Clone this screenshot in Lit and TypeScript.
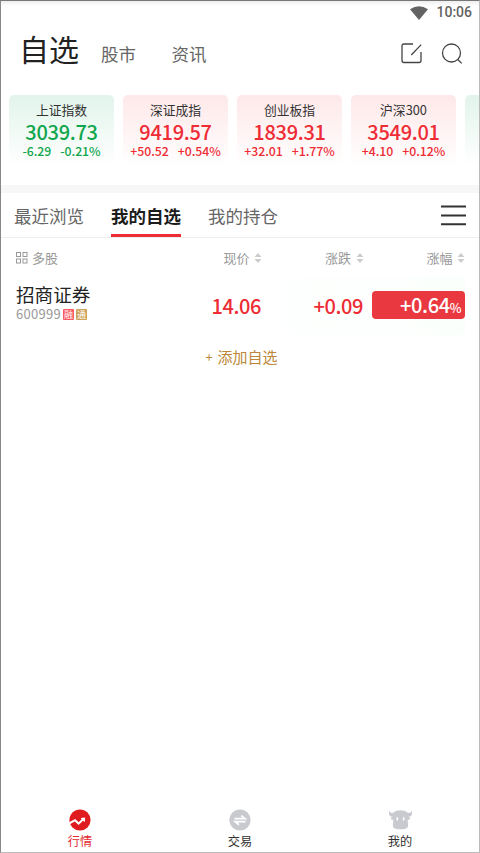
import { LitElement, html, css, svg } from "lit";
import { customElement } from "lit/decorators.js";
import { classMap } from "lit/directives/class-map.js";

interface Quote { name: string; price: string; diff: string; pct: string; up: boolean; }

const QUOTES: Quote[] = [
  { name: "上证指数", price: "3039.73", diff: "-6.29", pct: "-0.21%", up: false },
  { name: "深证成指", price: "9419.57", diff: "+50.52", pct: "+0.54%", up: true },
  { name: "创业板指", price: "1839.31", diff: "+32.01", pct: "+1.77%", up: true },
  { name: "沪深300", price: "3549.01", diff: "+4.10", pct: "+0.12%", up: true },
  { name: "", price: "", diff: "", pct: "", up: false },
];

const marketIcon = svg`<circle cx="11" cy="11" r="10.6" fill="#e01b20"/>
  <path d="M0 14.5L6 11.2L9.6 14.6L14.4 10" fill="none" stroke="#fff" stroke-width="2"/>
  <path d="M11.6 9L16.2 8.6L15.8 13.2Z" fill="#fff"/>`;
const tradeIcon = svg`<circle cx="11" cy="11" r="10.6" fill="#c8cad0"/>
  <path d="M5.4 9.7H16L12.2 6.6M16.6 12.6H6.2L10 15.7" fill="none" stroke="#fff" stroke-width="1.8"/>`;
const bullIcon = svg`<path d="M.4 1.8C-.8 6.4 .8 8 4 7.4C1.2 8.2 1.4 11 4.2 10.8C4.5 13 3.6 15 4 17.4C4.8 21.2 18.2 21.2 19 17.4C19.4 15 18.5 13 18.8 10.8C21.6 11 21.8 8.2 19 7.4C22.2 8 23.8 6.4 22.6 1.8C21.8 4 20 4.4 18.4 3.6C15 .6 8 .6 4.6 3.6C3 4.4 1.2 4 .4 1.8Z" fill="#c8cad0"/>
  <ellipse cx="8.3" cy="9.8" rx=".9" ry="1.9" fill="#fff"/><ellipse cx="14.7" cy="9.8" rx=".9" ry="1.9" fill="#fff"/>`;

@customElement("app-root")
export class AppRoot extends LitElement {
  static styles = css`
    :host { display: block; box-sizing: border-box; width: 480px; height: 853px; overflow: hidden;
      background: #fff; border: 1px solid #bbb; border-top-color: #777; border-left-color: #888;
      font-family: "Noto Sans CJK SC", sans-serif; color: #222; }
    * { box-sizing: border-box; }
    svg { display: block; flex: none; }
    .page { display: flex; flex-direction: column; height: 100%; white-space: nowrap; }
    .status { height: 23px; display: flex; justify-content: flex-end; align-items: center; gap: 8px;
      padding-right: 7px; background: linear-gradient(#eee, #fff 5px); color: #636363;
      font: 500 14px/23px Roboto, sans-serif; letter-spacing: 0; }
    .header { height: 71px; display: flex; align-items: center; padding: 0 16px 13px 18px; }
    .title { font-size: 30px; line-height: 40px; margin-top: -11px; width: 82px; }
    .link { font-size: 17.5px; line-height: 26px; color: #666; width: 70.5px; margin-top: 1px; }
    .spacer { flex: 1; }
    .tools { display: flex; gap: 19px; margin-top: 1px; }
    .cards { display: flex; gap: 9px; padding-left: 8px; height: 90px; flex: none; overflow: hidden; }
    .card { width: 105px; height: 71px; flex: none; border-radius: 5px 5px 0 0; text-align: center;
      background: linear-gradient(#e2f4eb, #fff); color: #10a64d; padding-top: 5px; }
    .card.up { background: linear-gradient(#fee8e9, #fff); color: #ed2c35; }
    .name { font-size: 12.8px; line-height: 20px; color: #333; }
    .price { font-weight: 500; font-size: 20px; line-height: 24px; letter-spacing: -.3px; }
    .delta { display: flex; justify-content: center; gap: 9px; font-weight: 500; font-size: 12.3px; line-height: 15px; letter-spacing: -.05px; }
    .band { height: 8px; background: #f7f7f7; flex: none; }
    .tabs { height: 45px; flex: none; display: flex; align-items: stretch; gap: 27px; padding: 0 13px 0 13px;
      border-bottom: 1px solid #eee; font-size: 17.5px; line-height: 46px; color: #666; }
    .tab.active { color: #1c1c1c; font-weight: 700; border-bottom: 3px solid #ed2c35; }
    .menu { align-self: center; }
    .columns { display: grid; grid-template-columns: 1fr 101.5px 101.5px; height: 39px; align-items: center;
      padding: 0 14px 0 15px; font-size: 13px; line-height: 20px; color: #999; flex: none; }
    .column { display: flex; align-items: center; justify-content: flex-end; gap: 4.5px; }
    .lead { display: flex; align-items: center; justify-content: space-between; }
    .multi { display: flex; align-items: center; gap: 4px; }
    .row { height: 58px; flex: none; display: flex; align-items: center; padding: 0 14px 0 15px;
      font-weight: 500; font-size: 20px; letter-spacing: -.4px; color: #ed2c35; }
    .stock { width: 162px; height: 58px; padding-top: 5px; font-weight: 400; letter-spacing: 0; }
    .stock-name { font-size: 18.6px; line-height: 24px; color: #222; }
    .code { display: flex; align-items: center; gap: 2px; font-size: 13px; line-height: 18px; margin-top: -1px; color: #999; }
    .code-number { width: 45px; letter-spacing: .3px; }
    .tag { width: 11px; height: 11px; border-radius: 1px; color: #fff; background: #fb5963; text-align: center;
      font-size: 9px; line-height: 11px; }
    .tag.gold { background: #cda35a; }
    .current, .change, .badge { text-align: right; }
    .values { flex: 1; height: 58px; display: flex; align-items: center; background: linear-gradient(90deg, #fff, #fbfffc); padding-bottom: 2px; line-height: 27px; }
    .current { width: 83px; }
    .change { width: 102px; }
    .badge { margin-left: 8.5px; width: 93.5px; height: 28px; line-height: 27px; border-radius: 4px; padding-right: 4px; background: #e9383f; color: #fff; }
    .unit { font-size: 12.5px; }
    .add { text-align: center; color: #bc8738; font-size: 15px; line-height: 22px; margin-top: 11px; padding-left: 3px; }
    .plus { font-size: 13px; margin-right: 5px; vertical-align: 1px; }
    .nav { display: grid; grid-template-columns: repeat(3, 160px); margin-left: -1px; margin-top: auto; height: 43px; }
    .nav-item { display: flex; flex-direction: column; align-items: center; font-size: 12.2px; line-height: 18px; color: #333; gap: 1px; }
    .nav-item.active { color: #e32930; }
  `;

  private sorter() {
    return html`<svg width="8" height="10" viewBox="0 0 8 10"><path d="M4 0L7.5 4H.5ZM.5 6H7.5L4 10Z" fill="#ccc"/></svg>`;
  }

  private card(q: Quote) {
    return html`<div class=${classMap({ card: true, up: q.up })}>
      <div class="name">${q.name}</div><div class="price">${q.price}</div>
      <div class="delta"><span>${q.diff}</span><span>${q.pct}</span></div>
    </div>`;
  }

  render() {
    return html`<div class="page">
      <div class="status"><svg width="18" height="14" viewBox="0 0 18 14"><path d="M0 3.2Q9-2.8 18 3.2L9 14Z" fill="#636363"/></svg><span>10:06</span></div>
      <header class="header">
        <span class="title">自选</span><span class="link">股市</span><span class="link">资讯</span><span class="spacer"></span>
        <div class="tools">
          <svg width="21" height="21" viewBox="0 0 21 21" fill="none" stroke="#444" stroke-width="1.3"><path d="M12 1H3Q1 1 1 3V17.5Q1 19.5 3 19.5H18Q20 19.5 20 17.5V9M10.3 12L20.2 1.6"/></svg>
          <svg width="22" height="21" viewBox="0 0 22 21" fill="none" stroke="#444" stroke-width="1.3"><circle cx="10.5" cy="10" r="9"/><path d="M16.5 16.3L20.7 20.4"/></svg>
        </div>
      </header>
      <section class="cards">${QUOTES.map((q) => this.card(q))}</section>
      <div class="band"></div>
      <nav class="tabs"><span class="tab">最近浏览</span><span class="tab active">我的自选</span><span class="tab">我的持仓</span><span class="spacer"></span>
        <svg class="menu" width="25" height="21" viewBox="0 0 25 21"><path d="M0 1.5H25M0 10.5H25M0 19.3H25" stroke="#333" stroke-width="1.9"/></svg></nav>
      <div class="columns">
        <div class="lead"><span class="multi"><svg width="12" height="12" viewBox="0 0 12 12" fill="none" stroke="#999"><rect x=".5" y=".5" width="4" height="4"/><rect x="7" y=".5" width="4" height="4"/><rect x=".5" y="7" width="4" height="4"/><rect x="7" y="7" width="4" height="4"/></svg>多股</span><span class="column">现价${this.sorter()}</span></div>
        <span class="column">涨跌${this.sorter()}</span><span class="column">涨幅${this.sorter()}</span>
      </div>
      <div class="row">
        <div class="stock"><div class="stock-name">招商证券</div><div class="code"><span class="code-number">600999</span><span class="tag">融</span><span class="tag gold">通</span></div></div>
        <div class="values"><span class="current">14.06</span><span class="change">+0.09</span><span class="badge">+0.64<span class="unit">%</span></span></div>
      </div>
      <div class="add"><span class="plus">+</span>添加自选</div>
      <nav class="nav">
        <div class="nav-item active"><svg width="22" height="22" viewBox="0 0 22 22">${marketIcon}</svg>行情</div>
        <div class="nav-item"><svg width="22" height="22" viewBox="0 0 22 22">${tradeIcon}</svg>交易</div>
        <div class="nav-item"><svg width="23" height="22" viewBox="0 0 23 22">${bullIcon}</svg>我的</div>
      </nav>
    </div>`;
  }
}
